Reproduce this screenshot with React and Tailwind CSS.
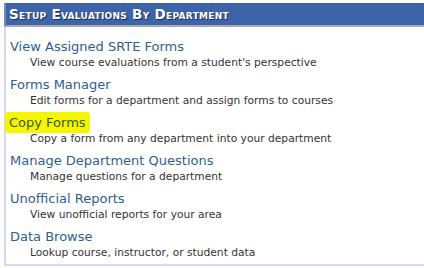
import React from 'react';

const items = [
  { title: 'View Assigned SRTE Forms', desc: "View course evaluations from a student's perspective" },
  { title: 'Forms Manager', desc: 'Edit forms for a department and assign forms to courses' },
  { title: 'Copy Forms', desc: 'Copy a form from any department into your department', marked: true },
  { title: 'Manage Department Questions', desc: 'Manage questions for a department' },
  { title: 'Unofficial Reports', desc: 'View unofficial reports for your area' },
  { title: 'Data Browse', desc: 'Lookup course, instructor, or student data' },
];

const App = () => {
  return (
    <div className="w-[424px] h-[268px] bg-white overflow-hidden pt-[3px] pl-[4px]" style={{ fontFamily: '"DejaVu Sans", Verdana, sans-serif' }}>
      <div className="w-[440px]">
        <div className="h-[24px] bg-[#3d63a8] border-l-2 border-[#7d8aa8] border-b-2 border-b-[#a9a9b3] flex items-center pl-[3px]">
          <span className="text-white font-bold text-[13.5px] [font-variant:small-caps] tracking-[0.3px] [text-shadow:1px_1px_0_#1e2f5a]">
            Setup Evaluations By Department
          </span>
        </div>
        <div className="border-l-2 border-b-2 border-[#d8d8f8] h-[239px] pt-[9px] pl-[4px]">
          {items.map((item) => (
            <div key={item.title} className="h-[38px]">
              <div className="h-[20px] flex items-center">
                <span
                  className={
                    item.marked
                      ? 'bg-[#f5f500] text-[#3d5a10] text-[13px] px-[4px] -ml-[5px] py-[1px] rounded-[3px] leading-[19px]'
                      : 'text-[#2e5e8e] text-[13px] leading-[19px]'
                  }
                >
                  {item.title}
                </span>
              </div>
              <div className="pl-[20px] text-[10.7px] text-[#333] leading-[14px]">{item.desc}</div>
            </div>
          ))}
        </div>
      </div>
    </div>
  );
};

export default App;
